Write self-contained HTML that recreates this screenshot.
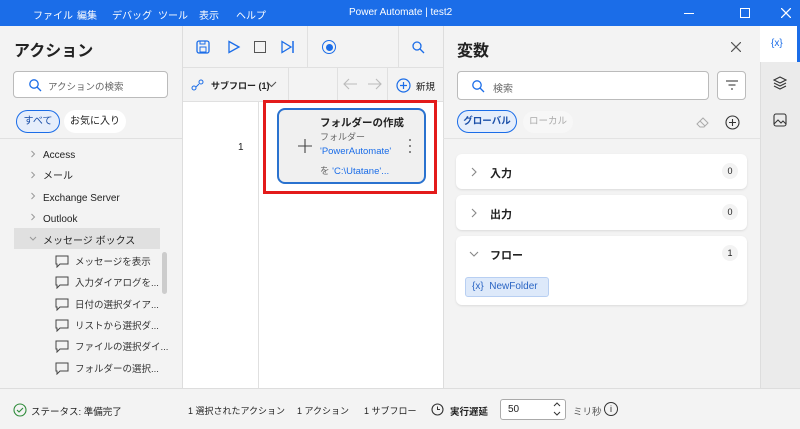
<!DOCTYPE html>
<html><head><meta charset="utf-8"><style>
*{box-sizing:border-box;margin:0;padding:0}
body{width:800px;height:429px;overflow:hidden;font-family:"Liberation Sans","Noto Sans CJK JP",sans-serif;font-size:11px;color:#222;background:#f3f3f3;position:relative}
.a{position:absolute}
.t{white-space:nowrap}
svg{position:absolute}
.m{position:absolute;top:7px;font-size:10px;color:#fff;white-space:nowrap}
.li{position:absolute;left:55px;font-size:9.5px;color:#333;white-space:nowrap}
.li svg{left:0;top:1px}
.li span{margin-left:20px}
</style></head><body>
<div class="a" style="left:0;top:0;width:800px;height:26px;background:#1b6de8;color:#fff">
 <span class="m" style="left:33px">ファイル</span>
 <span class="m" style="left:77px">編集</span>
 <span class="m" style="left:112px">デバッグ</span>
 <span class="m" style="left:158px">ツール</span>
 <span class="m" style="left:199px">表示</span>
 <span class="m" style="left:236px">ヘルプ</span>
 <span class="m" style="left:349px">Power Automate | test2</span>
 <div class="a" style="left:684px;top:13px;width:10px;height:1px;background:#fff"></div>
 <div class="a" style="left:740px;top:8px;width:10px;height:10px;border:1.3px solid #fff"></div>
 <svg style="left:781px;top:8px" width="10" height="10"><path d="M0 0l10 10M10 0L0 10" stroke="#fff" stroke-width="1.3"/></svg>
</div>
<!-- left panel -->
<div class="a t" style="left:14px;top:37px;font-size:16px;font-weight:bold">アクション</div>
<div class="a" style="left:13px;top:71px;width:155px;height:27px;background:#fff;border:1px solid #bbb;border-radius:4px"></div>
<svg style="left:28px;top:78px" width="14" height="14"><circle cx="6" cy="6" r="4.2" fill="none" stroke="#1b6de8" stroke-width="1.3"/><path d="M9 9l4 4" stroke="#1b6de8" stroke-width="1.3"/></svg>
<span class="a t" style="left:48px;top:79px;font-size:9.5px;color:#666">アクションの検索</span>
<div class="a" style="left:16px;top:110px;width:44px;height:23px;border:1px solid #1b6de8;background:#e6eefb;border-radius:12px;color:#1b4fa8;font-size:10px;text-align:center;line-height:21px">すべて</div>
<div class="a" style="left:64px;top:110px;width:62px;height:23px;background:#fff;border-radius:12px;font-size:10px;text-align:center;line-height:23px">お気に入り</div>
<div class="a" style="left:0;top:138px;width:182px;height:1px;background:#e0e0e0"></div>
<svg style="left:30px;top:150px" width="6" height="90"><path d="M1.5 1l3 3-3 3M1.5 22l3 3-3 3M1.5 43l3 3-3 3M1.5 64l3 3-3 3" fill="none" stroke="#999"/></svg>
<div class="a t" style="left:43px;top:145px;font-size:10px;line-height:21.3px">
 <div>Access</div><div>メール</div><div>Exchange Server</div><div>Outlook</div>
</div>
<div class="a" style="left:14px;top:228px;width:146px;height:21px;background:#e0e0e0"></div>
<svg style="left:29px;top:236px" width="8" height="6"><path d="M1 1l3 3 3-3" fill="none" stroke="#999"/></svg>
<span class="a t" style="left:43px;top:232px;font-size:10px">メッセージ ボックス</span>
<div class="a" style="left:162px;top:252px;width:5px;height:42px;background:#ccc;border-radius:3px"></div>
<div class="li" style="top:254px"><svg width="14" height="13"><path d="M1 1h12v8H5l-3 3V9H1z" fill="none" stroke="#444"/></svg><span>メッセージを表示</span></div>
<div class="li" style="top:275px"><svg width="14" height="13"><path d="M1 1h12v8H5l-3 3V9H1z" fill="none" stroke="#444"/></svg><span>入力ダイアログを...</span></div>
<div class="li" style="top:297px"><svg width="14" height="13"><path d="M1 1h12v8H5l-3 3V9H1z" fill="none" stroke="#444"/></svg><span>日付の選択ダイア...</span></div>
<div class="li" style="top:318px"><svg width="14" height="13"><path d="M1 1h12v8H5l-3 3V9H1z" fill="none" stroke="#444"/></svg><span>リストから選択ダ...</span></div>
<div class="li" style="top:339px"><svg width="14" height="13"><path d="M1 1h12v8H5l-3 3V9H1z" fill="none" stroke="#444"/></svg><span>ファイルの選択ダイ...</span></div>
<div class="li" style="top:361px"><svg width="14" height="13"><path d="M1 1h12v8H5l-3 3V9H1z" fill="none" stroke="#444"/></svg><span>フォルダーの選択...</span></div>
<div class="a" style="left:182px;top:26px;width:1px;height:362px;background:#ddd"></div>
<!-- middle -->
<div class="a" style="left:183px;top:26px;width:260px;height:42px;background:#f3f3f3;border-bottom:1px solid #e0e0e0"></div>
<svg style="left:196px;top:40px" width="14" height="14"><rect x="1" y="1" width="12" height="12" rx="2" fill="none" stroke="#1b6de8" stroke-width="1.3"/><rect x="4" y="7" width="6" height="5" fill="none" stroke="#1b6de8"/><path d="M4 1v3h5V1" fill="none" stroke="#1b6de8"/></svg>
<svg style="left:227px;top:40px" width="14" height="14"><path d="M2 1.5l10 5.5-10 5.5z" fill="none" stroke="#1b6de8" stroke-width="1.3"/></svg>
<div class="a" style="left:254px;top:41px;width:12px;height:12px;border:1.3px solid #555"></div>
<svg style="left:280px;top:40px" width="16" height="14"><path d="M2 1.5l9 5.5-9 5.5z" fill="none" stroke="#1b6de8" stroke-width="1.3"/><path d="M13 1v12" stroke="#1b6de8" stroke-width="1.5"/></svg>
<div class="a" style="left:307px;top:26px;width:1px;height:42px;background:#e0e0e0"></div>
<div class="a" style="left:322px;top:40px;width:14px;height:14px;border:1.3px solid #1b6de8;border-radius:50%"></div>
<div class="a" style="left:325.5px;top:43.5px;width:7px;height:7px;background:#1b6de8;border-radius:50%"></div>
<div class="a" style="left:398px;top:26px;width:1px;height:42px;background:#e0e0e0"></div>
<svg style="left:411px;top:40px" width="14" height="14"><circle cx="6" cy="6" r="4" fill="none" stroke="#1b6de8" stroke-width="1.3"/><path d="M9 9l4 4" stroke="#1b6de8" stroke-width="1.3"/></svg>
<div class="a" style="left:183px;top:68px;width:260px;height:34px;background:#f3f3f3;border-bottom:1px solid #e0e0e0"></div>
<svg style="left:191px;top:79px" width="14" height="12"><circle cx="3" cy="9" r="2" fill="none" stroke="#1b6de8"/><circle cx="10" cy="3" r="2" fill="none" stroke="#1b6de8"/><path d="M5 8l3-3" stroke="#1b6de8"/></svg>
<span class="a t" style="left:211px;top:79px;font-size:9px;font-weight:bold">サブフロー (1)</span>
<svg style="left:266px;top:81px" width="11" height="7"><path d="M1 1l4.5 4.5L10 1" fill="none" stroke="#555" stroke-width="1.1"/></svg>
<div class="a" style="left:288px;top:68px;width:1px;height:34px;background:#e0e0e0"></div>
<div class="a" style="left:337px;top:68px;width:1px;height:34px;background:#e0e0e0"></div>
<svg style="left:343px;top:78px" width="40" height="12"><path d="M14 6H1M6 1L1 6l5 5M25 6h13M33 1l5 5-5 5" fill="none" stroke="#bbb" stroke-width="1.1"/></svg>
<div class="a" style="left:387px;top:68px;width:1px;height:34px;background:#e0e0e0"></div>
<svg style="left:396px;top:78px" width="15" height="15"><circle cx="7.5" cy="7.5" r="6.5" fill="none" stroke="#1b6de8" stroke-width="1.2"/><path d="M7.5 4v7M4 7.5h7" stroke="#1b6de8" stroke-width="1.2"/></svg>
<span class="a t" style="left:416px;top:79px;font-size:9.5px">新規</span>
<div class="a" style="left:183px;top:102px;width:75px;height:286px;background:#fff"></div>
<div class="a" style="left:258px;top:102px;width:1px;height:286px;background:#e0e0e0"></div>
<div class="a" style="left:259px;top:102px;width:184px;height:286px;background:#fff"></div>
<span class="a" style="left:238px;top:142px;font-size:10px">1</span>
<div class="a" style="left:263px;top:100px;width:174px;height:94px;border:3px solid #e31b1b"></div>
<div class="a" style="left:277px;top:108px;width:149px;height:76px;background:#f0f0f0;border:2px solid #2a72cf;border-radius:8px"></div>
<svg style="left:298px;top:139px" width="14" height="14"><path d="M7 0v14M0 7h14" stroke="#444" stroke-width="1.1"/></svg>
<div class="a t" style="left:320px;top:115px;font-size:10.5px;font-weight:bold">フォルダーの作成</div>
<div class="a t" style="left:320px;top:130px;font-size:9px;color:#666">フォルダー</div>
<div class="a t" style="left:320px;top:146px;font-size:9.5px;color:#1b6de8">'PowerAutomate'</div>
<div class="a t" style="left:320px;top:163px;font-size:9.5px;color:#666">を <span style="color:#1b6de8">'C:\Utatane'...</span></div>
<svg style="left:408px;top:138px" width="4" height="16"><circle cx="2" cy="2" r="1" fill="#666"/><circle cx="2" cy="8" r="1" fill="#666"/><circle cx="2" cy="14" r="1" fill="#666"/></svg>
<div class="a" style="left:443px;top:26px;width:1px;height:362px;background:#ddd"></div>
<!-- variables -->
<div class="a t" style="left:457px;top:37px;font-size:16px;font-weight:bold">変数</div>
<svg style="left:731px;top:42px" width="10" height="10"><path d="M0 0l10 10M10 0L0 10" stroke="#555" stroke-width="1.2"/></svg>
<div class="a" style="left:457px;top:71px;width:252px;height:29px;background:#fff;border:1px solid #bbb;border-radius:4px"></div>
<svg style="left:471px;top:79px" width="14" height="14"><circle cx="6" cy="6" r="4.2" fill="none" stroke="#1b6de8" stroke-width="1.3"/><path d="M9 9l4 4" stroke="#1b6de8" stroke-width="1.3"/></svg>
<span class="a t" style="left:493px;top:80px;font-size:10px;color:#666">検索</span>
<div class="a" style="left:717px;top:71px;width:29px;height:29px;background:#fff;border:1px solid #bbb;border-radius:4px"></div>
<svg style="left:725px;top:80px" width="14" height="10"><path d="M1 1h12M3.5 5h7M6 9h2" stroke="#555" stroke-width="1.2"/></svg>
<div class="a" style="left:457px;top:110px;width:60px;height:23px;border:1px solid #1b6de8;background:#e6eefb;border-radius:12px;color:#1b4fa8;font-size:9.5px;text-align:center;line-height:21px;font-weight:bold">グローバル</div>
<div class="a" style="left:523px;top:111px;width:50px;height:22px;background:#f7f7f7;border-radius:12px;color:#aaa;font-size:9.5px;text-align:center;line-height:22px">ローカル</div>
<svg style="left:696px;top:116px" width="14" height="13"><path d="M1 8l6-6 5 5-4 4H4z M4 5l5 5" fill="none" stroke="#aaa"/></svg>
<svg style="left:725px;top:115px" width="15" height="15"><circle cx="7.5" cy="7.5" r="6.5" fill="none" stroke="#333" stroke-width="1.1"/><path d="M7.5 4v7M4 7.5h7" stroke="#333" stroke-width="1.1"/></svg>
<div class="a" style="left:443px;top:138px;width:317px;height:1px;background:#e3e3e3"></div>
<div class="a" style="left:456px;top:154px;width:291px;height:35px;background:#fff;border-radius:6px;box-shadow:0 1px 2px rgba(0,0,0,.1)"></div>
<div class="a" style="left:456px;top:195px;width:291px;height:35px;background:#fff;border-radius:6px;box-shadow:0 1px 2px rgba(0,0,0,.1)"></div>
<div class="a" style="left:456px;top:236px;width:291px;height:69px;background:#fff;border-radius:6px;box-shadow:0 1px 2px rgba(0,0,0,.1)"></div>
<svg style="left:471px;top:167px" width="6" height="10"><path d="M1 1l4 4-4 4" fill="none" stroke="#888" stroke-width="1.1"/></svg>
<span class="a t" style="left:490px;top:165px;font-size:11px;font-weight:bold">入力</span>
<svg style="left:471px;top:208px" width="6" height="10"><path d="M1 1l4 4-4 4" fill="none" stroke="#888" stroke-width="1.1"/></svg>
<span class="a t" style="left:490px;top:206px;font-size:11px;font-weight:bold">出力</span>
<svg style="left:469px;top:251px" width="10" height="6"><path d="M1 1l4 4 4-4" fill="none" stroke="#888" stroke-width="1.1"/></svg>
<span class="a t" style="left:490px;top:247px;font-size:11px;font-weight:bold">フロー</span>
<div class="a" style="left:722px;top:163px;width:16px;height:16px;border-radius:50%;background:#f3f3f3;font-size:9px;text-align:center;line-height:16px">0</div>
<div class="a" style="left:722px;top:204px;width:16px;height:16px;border-radius:50%;background:#f3f3f3;font-size:9px;text-align:center;line-height:16px">0</div>
<div class="a" style="left:722px;top:245px;width:16px;height:16px;border-radius:50%;background:#f3f3f3;font-size:9px;text-align:center;line-height:16px">1</div>
<div class="a t" style="left:465px;top:277px;width:84px;height:20px;background:#dde9fa;border:1px solid #b8cff2;border-radius:3px;color:#2a65c4;font-size:10px;line-height:18px;padding-left:6px">{x}&nbsp; NewFolder</div>
<!-- right strip -->
<div class="a" style="left:760px;top:26px;width:40px;height:362px;background:#ebebeb;border-left:1px solid #ddd"></div>
<div class="a" style="left:760px;top:26px;width:38px;height:36px;background:#fff"></div>
<div class="a" style="left:797px;top:26px;width:3px;height:36px;background:#1b6de8"></div>
<span class="a t" style="left:771px;top:38px;font-size:10px;color:#1b6de8">{x}</span>
<svg style="left:773px;top:76px" width="14" height="14"><path d="M7 1l6 3-6 3-6-3z M1 7l6 3 6-3 M1 10l6 3 6-3" fill="none" stroke="#333" stroke-width="1.1"/></svg>
<svg style="left:773px;top:113px" width="14" height="14"><rect x="1" y="1" width="12" height="12" rx="2" fill="none" stroke="#333" stroke-width="1.1"/><path d="M1 11l4-4 3 3 2-2 3 3" fill="none" stroke="#333"/></svg>
<!-- status -->
<div class="a" style="left:0;top:388px;width:800px;height:41px;background:#f3f3f3;border-top:1px solid #ddd"></div>
<svg style="left:13px;top:403px" width="14" height="14"><circle cx="7" cy="7" r="6" fill="none" stroke="#2e8b3a" stroke-width="1.1"/><path d="M4 7l2 2 4-4" fill="none" stroke="#2e8b3a" stroke-width="1.1"/></svg>
<span class="a t" style="left:31px;top:404px;font-size:9.5px">ステータス: 準備完了</span>
<span class="a t" style="left:188px;top:404px;font-size:9px">1 選択されたアクション</span>
<span class="a t" style="left:297px;top:404px;font-size:9px">1 アクション</span>
<span class="a t" style="left:364px;top:404px;font-size:9px">1 サブフロー</span>
<svg style="left:431px;top:403px" width="13" height="13"><circle cx="6.5" cy="6.5" r="5.5" fill="none" stroke="#333" stroke-width="1.1"/><path d="M6.5 3.5v3h2.5" fill="none" stroke="#333"/></svg>
<span class="a t" style="left:450px;top:404px;font-size:9.5px;font-weight:bold">実行遅延</span>
<div class="a" style="left:500px;top:399px;width:66px;height:21px;background:#fff;border:1px solid #aaa;border-radius:3px"></div>
<span class="a t" style="left:508px;top:404px;font-size:10px">50</span>
<svg style="left:553px;top:401px" width="8" height="16"><path d="M1 5l3-3 3 3M1 11l3 3 3-3" fill="none" stroke="#333"/></svg>
<span class="a t" style="left:573px;top:404px;font-size:9.5px;color:#555">ミリ秒</span>
<div class="a" style="left:604px;top:402px;width:14px;height:14px;border:1.2px solid #333;border-radius:50%;font-size:9px;line-height:12px;text-align:center">i</div>
</body></html>
